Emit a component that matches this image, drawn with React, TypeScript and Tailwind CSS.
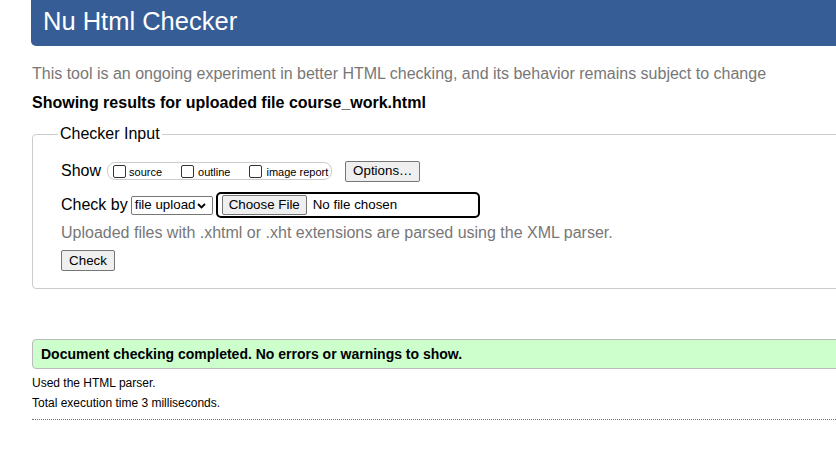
function Checkbox() {
  return <span className="inline-block h-[13px] w-[13px] shrink-0 rounded-[2px] border border-[#333] bg-white" />;
}

function Btn({ children, className = "" }: { children: React.ReactNode; className?: string }) {
  return (
    <span
      className={`inline-flex items-center justify-center rounded-[2px] border border-[#767676] bg-[#efefef] text-[13.33px] leading-[16px] text-black ${className}`}
    >
      {children}
    </span>
  );
}

export default function App() {
  return (
    <div className="h-[471px] w-[836px] overflow-hidden bg-white font-['Liberation_Sans',Arial,sans-serif] text-black">
      <div className="ml-[32px] w-[860px]">
        {/* Title bar */}
        <header className="-ml-px h-[46px] rounded-b-[5px] bg-[#365d96] pl-[12px] pt-[8px]">
          <h1 className="text-[25.5px] leading-[26px] text-white">Nu Html Checker</h1>
        </header>

        <p className="mt-[18px] text-[16px] leading-[20px] text-[#777]">
          This tool is an ongoing experiment in better HTML checking, and its behavior remains subject to change
        </p>
        <p className="mt-[9px] text-[16px] font-bold leading-[20px]">
          Showing results for uploaded file course_work.html
        </p>

        {/* Checker input form */}
        <fieldset className="mt-[11px] rounded-[4px] border border-[#ccc] pb-[16px] pl-[28px] pt-[16px]">
          <legend className="-ml-[3px] px-[2px] text-[16px] leading-[20px]">Checker Input</legend>

          <div className="flex h-[22px] items-center">
            <span className="text-[16px] leading-[20px]">Show</span>
            <span className="ml-[6px] flex h-[18px] items-center rounded-[8px] border border-[#ccc] pl-[5px] pr-[3px] text-[11px] leading-[13px]">
              <span className="flex items-center">
                <Checkbox />
                <span className="ml-[3px] mt-[2px]">source</span>
              </span>
              <span className="ml-[19px] flex items-center">
                <Checkbox />
                <span className="ml-[4px] mt-[2px]">outline</span>
              </span>
              <span className="ml-[19px] flex items-center">
                <Checkbox />
                <span className="ml-[4px] mt-[2px]">image report</span>
              </span>
            </span>
            <Btn className="ml-[13px] h-[21px] w-[75px]">Options…</Btn>
          </div>

          <div className="mt-[10px] flex h-[26px] items-center">
            <span className="text-[16px] leading-[20px]">Check by</span>
            <span className="ml-[3px] flex h-[19px] w-[82px] items-center justify-between rounded-[2px] border border-[#767676] bg-white pl-[3px] pr-[6px] text-[13.33px] leading-[16px]">
              file upload
              <svg width="9" height="6" viewBox="0 0 9 6" className="mt-px">
                <polyline points="1,1 4.5,4.5 8,1" fill="none" stroke="#000" strokeWidth="1.8" />
              </svg>
            </span>
            <span className="ml-[3px] flex h-[26px] w-[264px] items-center rounded-[5px] border-2 border-black">
              <Btn className="ml-[4px] h-[20px] w-[85px]">Choose File</Btn>
              <span className="ml-[6px] text-[13.33px] leading-[16px]">No file chosen</span>
            </span>
          </div>

          <p className="mt-[5px] text-[16px] leading-[20px] text-[#777]">
            Uploaded files with .xhtml or .xht extensions are parsed using the XML parser.
          </p>

          <Btn className="mt-[7px] h-[21px] w-[54px]">Check</Btn>
        </fieldset>

        {/* Results */}
        <div className="mt-[50px] flex h-[30px] items-center rounded-[4px] border border-[#bbb] bg-[#ccffcc] pl-[8px]">
          <span className="text-[14px] font-bold leading-[18px]">
            Document checking completed. No errors or warnings to show.
          </span>
        </div>
        <p className="mt-[4px] text-[12px] leading-[20px]">Used the HTML parser.</p>
        <p className="text-[12px] leading-[20px]">Total execution time 3 milliseconds.</p>
        <div className="mt-[6px] border-b border-dotted border-[#777]" />
      </div>
    </div>
  );
}
